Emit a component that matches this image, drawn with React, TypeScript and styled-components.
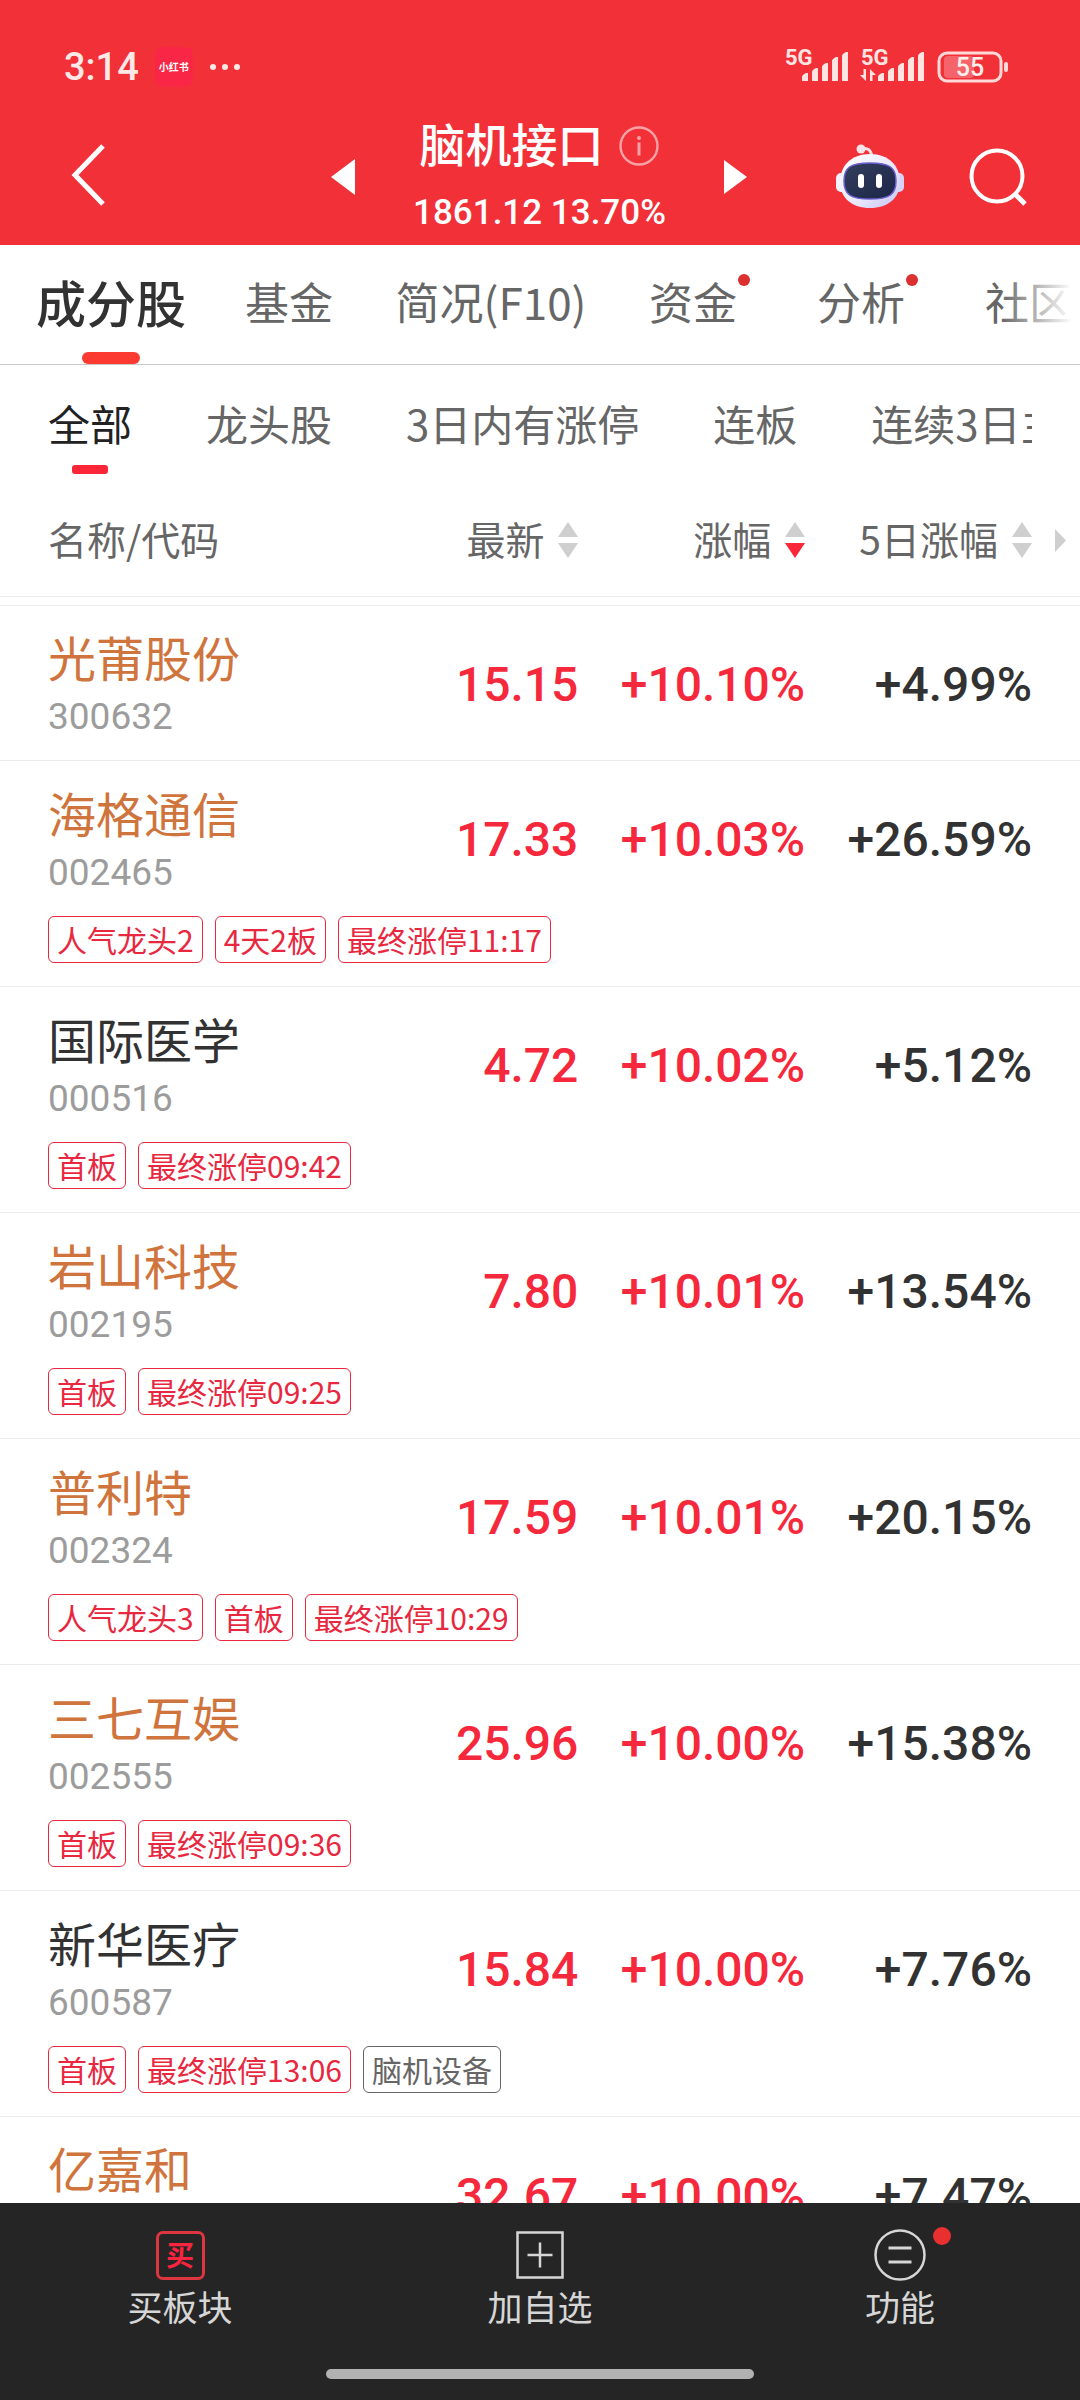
import React from "react";
import styled, { createGlobalStyle, css } from "styled-components";

const cjk = `"Noto Sans CJK SC", "Noto Sans", sans-serif`;
const num = `Roboto, "Noto Sans CJK SC", sans-serif`;

const color = {
  brand: "#f23038",
  up: "#f6283c",
  text: "#323232",
  muted: "#666666",
  code: "#9c9c9c",
  marked: "#cf743c",
  line: "#ebebeb",
  bar: "#252525",
  barText: "#d6d6d6",
};

const Global = createGlobalStyle`
  * { box-sizing: border-box; }
  body { margin: 0; background: #fff; font-family: ${cjk}; }
  button { border: 0; padding: 0; background: none; font: inherit; color: inherit; cursor: pointer; }
  svg { display: block; flex: none; }
`;

const Screen = styled.div`
  display: flex;
  flex-direction: column;
  height: 100vh;
  overflow: hidden;
`;

/* ---------- header ---------- */

const Header = styled.header`
  flex: none;
  background: ${color.brand};
  color: #fff;
`;

const StatusBar = styled.div`
  display: flex;
  align-items: center;
  justify-content: space-between;
  height: 105px;
  padding: 28px 71px 0 64px;
`;

const StatusGroup = styled.div<{ $gap: number }>`
  display: flex;
  align-items: center;
  gap: ${(p) => p.$gap}px;
`;

const Clock = styled.span`
  font: 500 38px/48px ${num};
  color: #ffe9e6;
`;

const AppBadge = styled.span`
  width: 38px;
  border-radius: 8px;
  background: #fa2645;
  color: #fff;
  font: 700 10px/40px ${cjk};
  text-align: center;
`;

const NavBar = styled.div`
  display: grid;
  grid-template-columns: 1fr auto 1fr;
  align-items: center;
  height: 140px;
  padding: 4px 52px 0 71px;
`;

const Actions = styled.div`
  display: flex;
  align-items: center;
  justify-content: flex-end;
  gap: 64px;
`;

const Pager = styled.div`
  display: flex;
  align-items: center;
  gap: 58px;
  padding-right: 20px;
`;

const Heading = styled.div`
  display: flex;
  flex-direction: column;
  align-items: center;
  gap: 15px;
  padding-bottom: 4px;
`;

const TitleLine = styled.div`
  display: flex;
  align-items: center;
  gap: 16px;
`;

const Title = styled.h1`
  margin: 0;
  padding-bottom: 8px;
  font: 500 46px/52px ${cjk};
`;

const Quote = styled.div`
  font: 500 35px/44px ${num};
`;

/* ---------- tabs ---------- */

const Tabs = styled.nav`
  flex: none;
  display: flex;
  height: 120px;
  padding-left: 17px;
  overflow: hidden;
  border-bottom: 1px solid #c8c8c8;
  position: relative;

  &::after {
    content: "";
    position: absolute;
    inset: 0 0 0 auto;
    width: 80px;
    background: linear-gradient(to right, rgba(255, 255, 255, 0), #fff 90%);
  }
`;

const Tab = styled.button<{ $active?: boolean; $width?: number }>`
  position: relative;
  flex: none;
  width: ${(p) => p.$width ?? 168}px;
  padding-bottom: 8px;
  font-size: 44px;
  color: ${color.muted};
  white-space: nowrap;

  ${(p) =>
    p.$active &&
    css`
      font-size: 50px;
      font-weight: 500;
      color: ${color.text};

      &::after {
        content: "";
        position: absolute;
        bottom: 0;
        left: calc(50% - 29px);
        width: 58px;
        height: 12px;
        border-radius: 6px;
        background: #fb3b32;
      }
    `}
`;

const TabDot = styled.i`
  position: absolute;
  top: 29px;
  right: 27px;
  width: 12px;
  height: 12px;
  border-radius: 50%;
  background: #dc2f2f;
`;

const Filters = styled.div`
  flex: none;
  display: flex;
  gap: 74px;
  height: 119px;
  margin: 0 48px;
  overflow: hidden;
`;

const Filter = styled.button<{ $active?: boolean }>`
  position: relative;
  flex: none;
  padding-bottom: 4px;
  font-size: 42px;
  color: ${(p) => (p.$active ? "#222" : color.muted)};
  white-space: nowrap;

  ${(p) =>
    p.$active &&
    css`
      &::after {
        content: "";
        position: absolute;
        bottom: 10px;
        left: calc(50% - 18px);
        width: 36px;
        height: 9px;
        border-radius: 3px;
        background: #fb2638;
      }
    `}
`;

/* ---------- table ---------- */

const List = styled.main`
  flex: 1;
  min-height: 0;
  overflow: hidden;
`;

const Table = styled.table`
  width: 100%;
  table-layout: fixed;
  border-spacing: 0;
`;

const NumCol = styled.col`
  width: 21%;
`;

const EdgeCol = styled.col`
  width: 48px;
`;

const HeadCell = styled.th<{ $left?: boolean }>`
  height: 113px;
  padding: 0 0 0 ${(p) => (p.$left ? 48 : 0)}px;
  border-bottom: 1px solid ${color.line};
  font-size: 39px;
  font-weight: 400;
  line-height: 48px;
  color: ${color.muted};
  text-align: ${(p) => (p.$left ? "left" : "right")};
  white-space: nowrap;
`;

const HeadLabel = styled.span`
  display: block;
  padding-bottom: 5px;
`;

const SortButton = styled.button`
  display: flex;
  align-items: center;
  gap: 14px;
  margin-left: auto;
`;

const MoreButton = styled.button`
  display: block;
  margin: 0 14px 0 auto;
`;

const GapCell = styled.td`
  height: 9px;
  padding: 0;
  border-bottom: 1px solid ${color.line};
`;

const Cell = styled.td<{ $line?: boolean }>`
  height: 155px;
  padding: 0;
  border-bottom: ${(p) => (p.$line ? `1px solid ${color.line}` : "0")};
`;

const NameCell = styled(Cell)`
  padding-left: 48px;
  white-space: nowrap;
`;

const NumCell = styled(Cell)<{ $up?: boolean }>`
  padding-top: 3px;
  font: 500 48px/56px ${num};
  color: ${(p) => (p.$up ? color.up : color.text)};
  text-align: right;
  white-space: nowrap;
`;

const Name = styled.div<{ $marked?: boolean }>`
  padding-bottom: 10px;
  font-size: 48px;
  line-height: 58px;
  color: ${(p) => (p.$marked ? color.marked : color.text)};
`;

const Code = styled.div`
  height: 44px;
  font: 400 37px/44px ${num};
  color: ${color.code};
`;

const TagCell = styled.td`
  padding: 0 48px 23px;
  border-bottom: 1px solid ${color.line};
`;

const TagRow = styled.div`
  display: flex;
  gap: 12px;
`;

const Tag = styled.span<{ $plain?: boolean }>`
  padding: 0 8px;
  border: 1px solid currentColor;
  border-radius: 6px;
  font-size: 30px;
  line-height: 45px;
  color: ${(p) => (p.$plain ? color.muted : "#e8283f")};
  white-space: nowrap;
`;

/* ---------- bottom bar ---------- */

const Footer = styled.footer`
  flex: none;
  height: 197px;
  background: ${color.bar};
  color: ${color.barText};
`;

const FooterActions = styled.div`
  display: grid;
  grid-template-columns: repeat(3, 1fr);
  height: 166px;
`;

const FooterButton = styled.button`
  display: flex;
  flex-direction: column;
  align-items: center;
  padding-top: 26px;
  font-size: 35px;
  line-height: 50px;
`;

const IconBox = styled.span`
  position: relative;
  display: grid;
  place-items: center;
  width: 52px;
  height: 52px;
`;

const BuyIcon = styled.span`
  width: 49px;
  height: 49px;
  border: 3px solid #dd3640;
  border-radius: 7px;
  font: 700 28px/41px ${cjk};
  color: #fa2440;
  text-align: center;
`;

const FooterDot = styled.i`
  position: absolute;
  top: -2px;
  right: -25px;
  width: 18px;
  height: 18px;
  border-radius: 50%;
  background: #ea2f30;
`;

const HomeIndicator = styled.div`
  width: 428px;
  max-width: 60%;
  height: 10px;
  margin: 0 auto;
  border-radius: 5px;
  background: #b2b2b2;
`;

/* ---------- drawings ---------- */

const Signal = ({ data }: { data?: boolean }) => (
  <svg width="66" height="44" viewBox="0 0 66 44" fill="#ffe4e2" overflow="visible">
    <text x="0" y="20" fontSize="22" fontWeight="700" fontFamily="Roboto">
      5G
    </text>
    {[8, 13, 18, 24, 29].map((h, i) => {
      const x = 17 + i * 10;
      return <path key={h} d={`M${x} ${36 - h + 4}q0-2 4-4h2V36h-6z`} />;
    })}
    {data && <path d="M5 24v12l-6-6h3.500v-6zM9 36V24l6 6h-3.500v6z" />}
  </svg>
);

const Battery = () => (
  <svg width="72" height="32" viewBox="0 0 72 32">
    <rect x="7" y="5" width="30" height="22" rx="4" fill="#fff" opacity="0.25" />
    <rect x="2" y="2" width="62" height="28" rx="8" fill="none" stroke="#ffd9d7" strokeWidth="3" />
    <rect x="67" y="11" width="4" height="10" rx="2" fill="#ffd9d7" />
    <text x="33" y="25" fontSize="25" fontWeight="500" fontFamily="Roboto" fill="#fff0ee" textAnchor="middle">
      55
    </text>
  </svg>
);

const Dots = () => (
  <svg width="32" height="8" viewBox="0 0 32 8" fill="#ffe9e6">
    <circle cx="4" cy="4" r="3" />
    <circle cx="16" cy="4" r="3" />
    <circle cx="28" cy="4" r="3" />
  </svg>
);

const BackIcon = () => (
  <svg width="38" height="62" viewBox="0 0 38 62" fill="none" stroke="#fff" strokeWidth="5">
    <path d="M32 2 4 31l28 29" />
  </svg>
);

const Triangle = ({ right }: { right?: boolean }) => (
  <svg width="24" height="36" viewBox="0 0 24 36" fill="#fff">
    <path d={right ? "M0 1v34l23-17z" : "M24 0v36L0 18z"} />
  </svg>
);

const InfoIcon = () => (
  <svg width="40" height="40" viewBox="0 0 40 40" opacity="0.55">
    <circle cx="20" cy="20" r="18.5" fill="none" stroke="#fff" strokeWidth="2.4" />
    <circle cx="20" cy="12" r="2" fill="#fff" />
    <path d="M20 16.500v13" stroke="#fff" strokeWidth="3" />
  </svg>
);

const Robot = () => (
  <svg width="68" height="66" viewBox="0 0 68 66">
    <defs>
      <linearGradient id="shell" x1="0" y1="0" x2="1" y2="1">
        <stop offset="0" stopColor="#ffffff" />
        <stop offset="0.6" stopColor="#e9e6fb" />
        <stop offset="1" stopColor="#c4c1f2" />
      </linearGradient>
      <linearGradient id="visor" x1="0" y1="0" x2="1" y2="1">
        <stop offset="0" stopColor="#343f5e" />
        <stop offset="1" stopColor="#1b2547" />
      </linearGradient>
    </defs>
    <path d="M25 5c7-2 10 1 11 8" fill="none" stroke="#f7dfe8" strokeWidth="3" />
    <circle cx="25" cy="5" r="4.500" fill="#fbe3ea" />
    <rect x="0" y="29" width="12" height="19" rx="5" fill="#f4f1ff" />
    <rect x="56" y="29" width="12" height="19" rx="5" fill="#d6d3f8" />
    <path d="M34 10c19 0 30 12 30 28S52 64 34 64 4 54 4 38s11-28 30-28z" fill="url(#shell)" />
    <path
      d="M34 19c19 0 26 4 26 18s-7 18-26 18S8 51 8 37s7-18 26-18z"
      fill="url(#visor)"
      stroke="#6a5fd0"
      strokeWidth="1.500"
    />
    <rect x="22" y="30" width="6" height="14" rx="3" fill="#fff" />
    <rect x="40" y="30" width="6" height="14" rx="3" fill="#fff" />
  </svg>
);

const SearchIcon = () => (
  <svg width="60" height="60" viewBox="0 0 60 60" fill="none" stroke="#fff" strokeWidth="4">
    <circle cx="29" cy="29" r="25.500" />
    <path d="m47 47 10 10" strokeWidth="5" />
  </svg>
);

const SortIcon = ({ desc }: { desc?: boolean }) => (
  <svg width="20" height="36" viewBox="0 0 20 36" fill="#cfcfcf">
    <path d="M10 0 20 15H0z" />
    <path d="M10 36 0 21h20z" fill={desc ? "#fb2638" : "#cfcfcf"} />
  </svg>
);

const MoreIcon = () => (
  <svg width="11" height="23" viewBox="0 0 11 23" fill="#cfcfcf">
    <path d="M0 0v23l11-11.500z" />
  </svg>
);

const AddIcon = () => (
  <svg width="48" height="48" viewBox="0 0 48 48" fill="none" stroke={color.barText} strokeWidth="2.500">
    <path d="M1.500 1.500h45v45h-45zM24 11.500v25M11.500 24h25" />
  </svg>
);

const MenuIcon = () => (
  <svg width="52" height="52" viewBox="0 0 52 52" fill="none" stroke={color.barText} strokeWidth="2.500">
    <circle cx="26" cy="26" r="24.500" />
    <path d="M14.500 19h23M14.500 33h23" strokeWidth="3" />
  </svg>
);

/* ---------- data ---------- */

type Stock = {
  name: string;
  code?: string;
  marked?: boolean;
  price: string;
  change: string;
  change5: string;
  tags?: string[];
  concept?: string;
};

const stocks: Stock[] = [
  { name: "光莆股份", code: "300632", marked: true, price: "15.15", change: "+10.10%", change5: "+4.99%" },
  {
    name: "海格通信",
    code: "002465",
    marked: true,
    price: "17.33",
    change: "+10.03%",
    change5: "+26.59%",
    tags: ["人气龙头2", "4天2板", "最终涨停11:17"],
  },
  {
    name: "国际医学",
    code: "000516",
    price: "4.72",
    change: "+10.02%",
    change5: "+5.12%",
    tags: ["首板", "最终涨停09:42"],
  },
  {
    name: "岩山科技",
    code: "002195",
    marked: true,
    price: "7.80",
    change: "+10.01%",
    change5: "+13.54%",
    tags: ["首板", "最终涨停09:25"],
  },
  {
    name: "普利特",
    code: "002324",
    marked: true,
    price: "17.59",
    change: "+10.01%",
    change5: "+20.15%",
    tags: ["人气龙头3", "首板", "最终涨停10:29"],
  },
  {
    name: "三七互娱",
    code: "002555",
    marked: true,
    price: "25.96",
    change: "+10.00%",
    change5: "+15.38%",
    tags: ["首板", "最终涨停09:36"],
  },
  {
    name: "新华医疗",
    code: "600587",
    price: "15.84",
    change: "+10.00%",
    change5: "+7.76%",
    tags: ["首板", "最终涨停13:06"],
    concept: "脑机设备",
  },
  { name: "亿嘉和", marked: true, price: "32.67", change: "+10.00%", change5: "+7.47%" },
];

const filters = ["全部", "龙头股", "3日内有涨停", "连板", "连续3日主"];

const StockRows = ({ stock }: { stock: Stock }) => {
  const line = !stock.tags;
  return (
    <tbody>
      <tr>
        <NameCell $line={line}>
          <Name $marked={stock.marked}>{stock.name}</Name>
          <Code>{stock.code}</Code>
        </NameCell>
        <NumCell $line={line} $up>
          {stock.price}
        </NumCell>
        <NumCell $line={line} $up>
          {stock.change}
        </NumCell>
        <NumCell $line={line}>{stock.change5}</NumCell>
        <Cell $line={line} />
      </tr>
      {stock.tags && (
        <tr>
          <TagCell colSpan={5}>
            <TagRow>
              {stock.tags.map((t) => (
                <Tag key={t}>{t}</Tag>
              ))}
              {stock.concept && <Tag $plain>{stock.concept}</Tag>}
            </TagRow>
          </TagCell>
        </tr>
      )}
    </tbody>
  );
};

const SortHead = ({ label, desc }: { label: string; desc?: boolean }) => (
  <HeadCell>
    <SortButton>
      <HeadLabel>{label}</HeadLabel>
      <SortIcon desc={desc} />
    </SortButton>
  </HeadCell>
);

export default function App() {
  return (
    <Screen>
      <Global />
      <Header>
        <StatusBar>
          <StatusGroup $gap={16}>
            <Clock>3:14</Clock>
            <AppBadge>小红书</AppBadge>
            <Dots />
          </StatusGroup>
          <StatusGroup $gap={10}>
            <Signal />
            <Signal data />
            <Battery />
          </StatusGroup>
        </StatusBar>
        <NavBar>
          <div>
            <button aria-label="返回">
              <BackIcon />
            </button>
          </div>
          <Pager>
            <button aria-label="上一个板块">
              <Triangle />
            </button>
            <Heading>
              <TitleLine>
                <Title>脑机接口</Title>
                <button aria-label="说明">
                  <InfoIcon />
                </button>
              </TitleLine>
              <Quote>1861.12 13.70%</Quote>
            </Heading>
            <button aria-label="下一个板块">
              <Triangle right />
            </button>
          </Pager>
          <Actions>
            <button aria-label="智能助手">
              <Robot />
            </button>
            <button aria-label="搜索">
              <SearchIcon />
            </button>
          </Actions>
        </NavBar>
      </Header>

      <Tabs>
        <Tab $active $width={188}>
          成分股
        </Tab>
        <Tab>基金</Tab>
        <Tab $width={236}>简况(F10)</Tab>
        <Tab>
          资金
          <TabDot />
        </Tab>
        <Tab>
          分析
          <TabDot />
        </Tab>
        <Tab>社区</Tab>
      </Tabs>

      <Filters>
        {filters.map((f, i) => (
          <Filter key={f} $active={i === 0}>
            {f}
          </Filter>
        ))}
      </Filters>

      <List>
        <Table>
          <colgroup>
            <col />
            <NumCol />
            <NumCol />
            <NumCol />
            <EdgeCol />
          </colgroup>
          <thead>
            <tr>
              <HeadCell $left>
                <HeadLabel>名称/代码</HeadLabel>
              </HeadCell>
              <SortHead label="最新" />
              <SortHead label="涨幅" desc />
              <SortHead label="5日涨幅" />
              <HeadCell>
                <MoreButton aria-label="更多指标">
                  <MoreIcon />
                </MoreButton>
              </HeadCell>
            </tr>
            <tr>
              <GapCell colSpan={5} />
            </tr>
          </thead>
          {stocks.map((s) => (
            <StockRows key={s.name} stock={s} />
          ))}
        </Table>
      </List>

      <Footer>
        <FooterActions>
          <FooterButton>
            <IconBox>
              <BuyIcon>买</BuyIcon>
            </IconBox>
            买板块
          </FooterButton>
          <FooterButton>
            <IconBox>
              <AddIcon />
            </IconBox>
            加自选
          </FooterButton>
          <FooterButton>
            <IconBox>
              <MenuIcon />
              <FooterDot />
            </IconBox>
            功能
          </FooterButton>
        </FooterActions>
        <HomeIndicator />
      </Footer>
    </Screen>
  );
}
